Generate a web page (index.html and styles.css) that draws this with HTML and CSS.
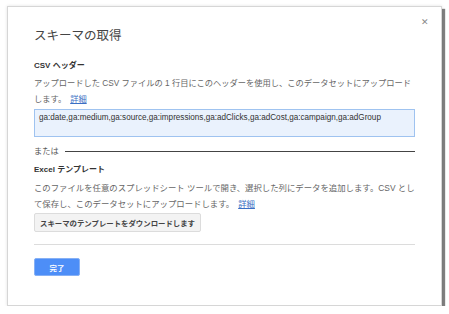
FILE: index.html
```html
<!DOCTYPE html>
<html lang="ja">
<head>
<meta charset="utf-8">
<link rel="stylesheet" href="styles.css">
</head>
<body>
<div class="dialog">
  <span class="close">&#x2715;</span>
  <h1 class="title">スキーマの取得</h1>
  <h2 class="section">CSV ヘッダー</h2>
  <p class="desc desc-csv">アップロードした CSV ファイルの 1 行目にこのヘッダーを使用し、このデータセットにアップロードします。<a class="link" href="#">詳細</a></p>
  <div class="field">ga:date,ga:medium,ga:source,ga:impressions,ga:adClicks,ga:adCost,ga:campaign,ga:adGroup</div>
  <div class="or"><span>または</span><span class="or-line"></span></div>
  <h2 class="section section-excel">Excel テンプレート</h2>
  <p class="desc desc-excel">このファイルを任意のスプレッドシート ツールで開き、選択した列にデータを追加します。CSV として保存し、このデータセットにアップロードします。<a class="link" href="#">詳細</a></p>
  <button class="btn-gray">スキーマのテンプレートをダウンロードします</button>
  <div class="sep"></div>
  <button class="btn-blue">完了</button>
</div>
</body>
</html>
```

FILE: styles.css
```css
html, body {
  margin: 0;
  padding: 0;
  background: #fff;
}
body {
  font-family: "Liberation Sans", "Noto Sans CJK JP", sans-serif;
}
.dialog {
  position: relative;
  box-sizing: border-box;
  margin: 6px 0 0 7px;
  width: 435px;
  height: 300px;
  border: 1px solid #d6d6d6;
  background: #fff;
  padding: 21px 26px 0 26px;
  box-shadow: 3px 3px 1px rgba(0,0,0,0.5), 0 0 3px rgba(0,0,0,0.12);
}
.close {
  position: absolute;
  top: 10px;
  right: 12px;
  font-size: 8.5px;
  line-height: 10px;
  color: #888;
}
.title {
  margin: 0;
  font-size: 12.5px;
  line-height: 16px;
  font-weight: normal;
  color: #444;
}
.section {
  margin: 16px 0 0 0;
  font-size: 8px;
  line-height: 12px;
  font-weight: bold;
  color: #333;
}
.desc {
  margin: 4px 0 0 0;
  font-size: 8.4px;
  line-height: 16px;
  color: #666;
}
.desc-csv {
  font-size: 8.25px;
}
.link {
  display: inline-block;
  margin-left: 4px;
  color: #3b6fc4;
  text-decoration: underline;
}
.field {
  margin-top: 1px;
  box-sizing: border-box;
  height: 28px;
  border: 1px solid #9fc3f0;
  background: #eaf2fd;
  padding: 2px 4px 0 4px;
  font-size: 8.15px;
  line-height: 12px;
  color: #333;
}
.or {
  display: flex;
  align-items: center;
  margin-top: 9px;
  font-size: 8.2px;
  line-height: 12px;
  color: #555;
}
.or-line {
  flex: 1;
  height: 1px;
  background: #444;
  margin: -2px 0 0 6px;
}
.section-excel {
  margin-top: 6px;
}
.desc-excel {
  margin-top: 4px;
}
.btn-gray {
  display: block;
  margin-top: 1px;
  height: 19px;
  padding: 0 5px;
  border: 1px solid #dcdcdc;
  border-radius: 2px;
  background: #f3f3f3;
  font-family: inherit;
  font-size: 7.4px;
  font-weight: bold;
  color: #444;
}
.sep {
  margin-top: 12px;
  border-top: 1px solid #dcdcdc;
}
.btn-blue {
  display: block;
  margin-top: 13px;
  width: 46px;
  height: 18px;
  padding: 0;
  border: 1px solid #86b0f5;
  border-radius: 2px;
  background: #4d8ef7;
  font-family: inherit;
  font-size: 7.4px;
  font-weight: bold;
  color: #fff;
}
```
